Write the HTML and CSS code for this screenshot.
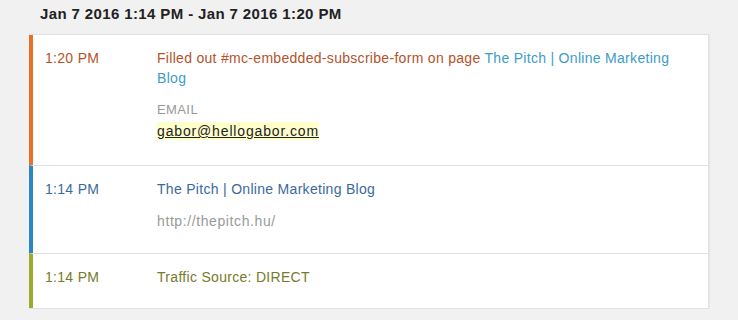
FILE: index.html
```html
<!DOCTYPE html>
<html>
<head>
<meta charset="utf-8">
<link rel="stylesheet" href="styles.css">
</head>
<body>
<div class="page">
  <h2 class="range">Jan 7 2016 1:14 PM - Jan 7 2016 1:20 PM</h2>
  <div class="card">
    <div class="row row-form">
      <div class="time">1:20 PM</div>
      <div class="body">
        <div class="desc">Filled out #mc-embedded-subscribe-form on page <a class="link" href="#">The Pitch | Online Marketing Blog</a></div>
        <div class="field">
          <div class="label">EMAIL</div>
          <div class="value"><span class="mark">gabor@hellogabor.com</span></div>
        </div>
      </div>
    </div>
    <div class="row row-page">
      <div class="time">1:14 PM</div>
      <div class="body">
        <div class="desc title">The Pitch | Online Marketing Blog</div>
        <div class="url">http://thepitch.hu/</div>
      </div>
    </div>
    <div class="row row-source">
      <div class="time">1:14 PM</div>
      <div class="body">
        <div class="desc">Traffic Source: DIRECT</div>
      </div>
    </div>
  </div>
</div>
</body>
</html>
```
FILE: styles.css
```css
html, body {
  margin: 0;
  padding: 0;
  background: #f1f1f1;
}
body {
  font-family: "Liberation Sans", Arial, sans-serif;
  font-size: 14px;
  line-height: 20px;
  letter-spacing: 0.3px;
  color: #444;
}
.page {
  padding: 4px 30px 0 29px;
}
.range {
  margin: 0 0 10px 11px;
  font-size: 15px;
  line-height: 20px;
  letter-spacing: 0.38px;
  font-weight: bold;
  color: #222;
}
.card {
  width: 679px;
  background: #fff;
  border: 1px solid #e2e2e2;
  border-left: none;
  box-shadow: 1px 1px 1px rgba(0,0,0,0.04);
}
.row {
  display: flex;
  padding: 13px 0 12px;
  border-left: 4px solid #e8702a;
  border-top: 1px solid #e2e2e2;
}
.row:first-child {
  border-top: none;
}
.time {
  width: 112px;
  padding-left: 12px;
  flex: none;
}
.body {
  flex: 1;
  padding-right: 30px;
}
.desc {
  margin-bottom: 10px;
}
.row-form { border-left-color: #e8702a; }
.row-form .time, .row-form .desc { color: #b4532a; }
.link {
  color: #3d9cc8;
  text-decoration: none;
}
.row-form .desc { margin-bottom: 12px; }
.label {
  color: #999;
  font-size: 13px;
  letter-spacing: 0.4px;
  margin-top: 1px;
  margin-bottom: -1px;
}
.value {
  margin-top: 2px;
  margin-bottom: 12px;
}
.mark {
  background: #ffffcc;
  color: #222;
  text-decoration: underline;
  letter-spacing: 0.85px;
  padding: 1px 0;
}
.row-page { border-left-color: #2b86c5; }
.row-page .time, .row-page .title { color: #3a6a9c; }
.row-page .title { margin-bottom: 12px; }
.url {
  color: #999;
  letter-spacing: 0.6px;
  margin-bottom: 10px;
}
.row-source { border-left-color: #9dab2c; }
.row-source .time, .row-source .desc { color: #787a2c; }
.row-source .desc { margin-bottom: 9px; }
```
